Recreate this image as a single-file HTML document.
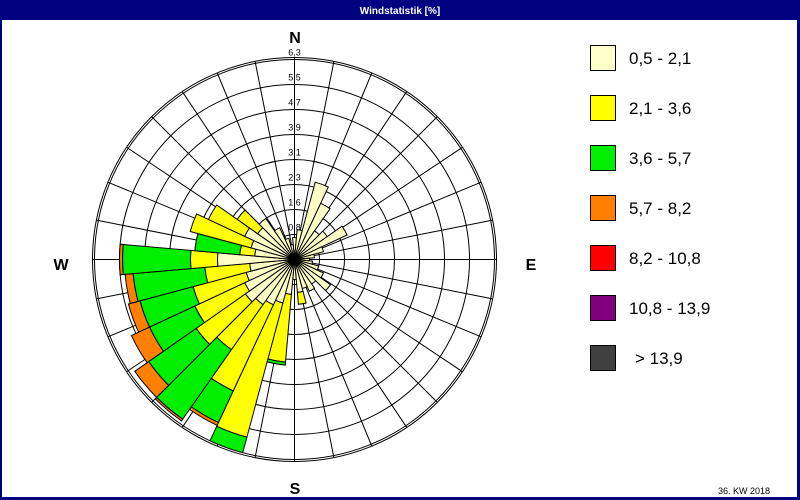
<!DOCTYPE html>
<html><head><meta charset="utf-8"><style>
html,body{margin:0;padding:0;background:#fff}
#w{position:relative;width:800px;height:500px;overflow:hidden;font-family:"Liberation Sans",sans-serif}
</style></head><body><div id="w">
<svg id="s" width="800" height="500" xmlns="http://www.w3.org/2000/svg" style="position:absolute;left:0;top:0">
<rect x="0" y="0" width="800" height="500" fill="#000080"/>
<rect x="2" y="20" width="795" height="477" fill="#fff"/>
<text x="400" y="14" fill="#fff" font-size="10" font-weight="bold" text-anchor="middle" font-family="Liberation Sans, sans-serif">Windstatistik [%]</text>
<g id="grid" stroke="#000" stroke-width="1" fill="none"></g>
<g id="bars" stroke="#000" stroke-width="1"></g>
<g id="lbl" font-size="9" fill="#000" text-anchor="middle" font-family="Liberation Sans, sans-serif"></g>
<g font-size="16" font-weight="bold" font-family="Liberation Sans, sans-serif" text-anchor="middle">
<text x="295" y="43">N</text><text x="295" y="494">S</text><text x="61" y="270">W</text><text x="531" y="270">E</text>
</g>
<g id="leg" font-size="17" font-family="Liberation Sans, sans-serif"></g>
<text x="770" y="494" font-size="9" text-anchor="end" font-family="Liberation Sans, sans-serif">36. KW 2018</text>
</svg>
<script>
var NS="http://www.w3.org/2000/svg",cx=294.5,cy=259.5;
function el(p,t,a,txt){var e=document.createElementNS(NS,t);for(var k in a)e.setAttribute(k,a[k]);if(txt)e.textContent=txt;document.getElementById(p).appendChild(e);return e;}
for(var i=1;i<=8;i++)el("grid","circle",{cx:cx,cy:cy,r:i*25});
el("grid","circle",{cx:cx,cy:cy,r:202});
for(var i=0;i<32;i++){var a=i*11.25*Math.PI/180;el("grid","line",{x1:cx,y1:cy,x2:cx+202*Math.sin(a),y2:cy-202*Math.cos(a)});}
var labs=["0,8","1,6","2,3","3,1","3,9","4,7","5,5","6,3"];
for(var i=0;i<8;i++){var t=el("lbl","text",{x:cx,y:cy-(i+1)*25-4},labs[i]);}
var cols=["#ffffc8","#ffff00","#00ee00","#ff8000"];
var d={0:[22],10:[30],20:[80],30:[62],40:[35],50:[40],60:[58],70:[30],80:[20],90:[15],100:[18],110:[25],120:[32],130:[44],140:[30],150:[35],160:[30],170:[33,45],180:[20],
190:[35,103,106],200:[45,184,200],210:[50,145,180,183],220:[55,110,195,197],230:[60,120,178,195],240:[55,110,160,180],250:[50,105,160,172],260:[45,90,162,170],270:[77,104,172,175],280:[40,55,100],290:[45,108],300:[55,95],310:[45,70],320:[50],330:[35],340:[22],350:[15]};
function wedge(a0,a1,r0,r1,c){var p=function(a,r){a=a*Math.PI/180;return (cx+r*Math.sin(a)).toFixed(1)+","+(cy-r*Math.cos(a)).toFixed(1);};
var s="M"+p(a0,r0)+" L"+p(a0,r1)+" A"+r1+","+r1+" 0 0 1 "+p(a1,r1)+" L"+p(a1,r0)+(r0>0?" A"+r0+","+r0+" 0 0 0 "+p(a0,r0):"")+"Z";
el("bars","path",{d:s,fill:c});}
for(var k in d){var v=d[k],a=+k,r0=0;for(var j=0;j<v.length;j++){wedge(a-5,a+5,r0,v[j],cols[j]);r0=v[j];}}
el("bars","circle",{cx:cx,cy:cy,r:5,fill:"#000"});
var lt=["0,5 - 2,1","2,1 - 3,6","3,6 - 5,7","5,7 - 8,2","8,2 - 10,8","10,8 - 13,9","> 13,9"];
var lc=["#ffffc8","#ffff00","#00ee00","#ff8000","#ff0000","#800080","#404040"];
for(var i=0;i<7;i++){var y=45+i*50;el("leg","rect",{x:590.5,y:y+0.5,width:25,height:25,fill:lc[i],stroke:"#000"});el("leg","text",{x:i==6?635:629,y:y+19},lt[i]);}
</script>
</div></body></html>
